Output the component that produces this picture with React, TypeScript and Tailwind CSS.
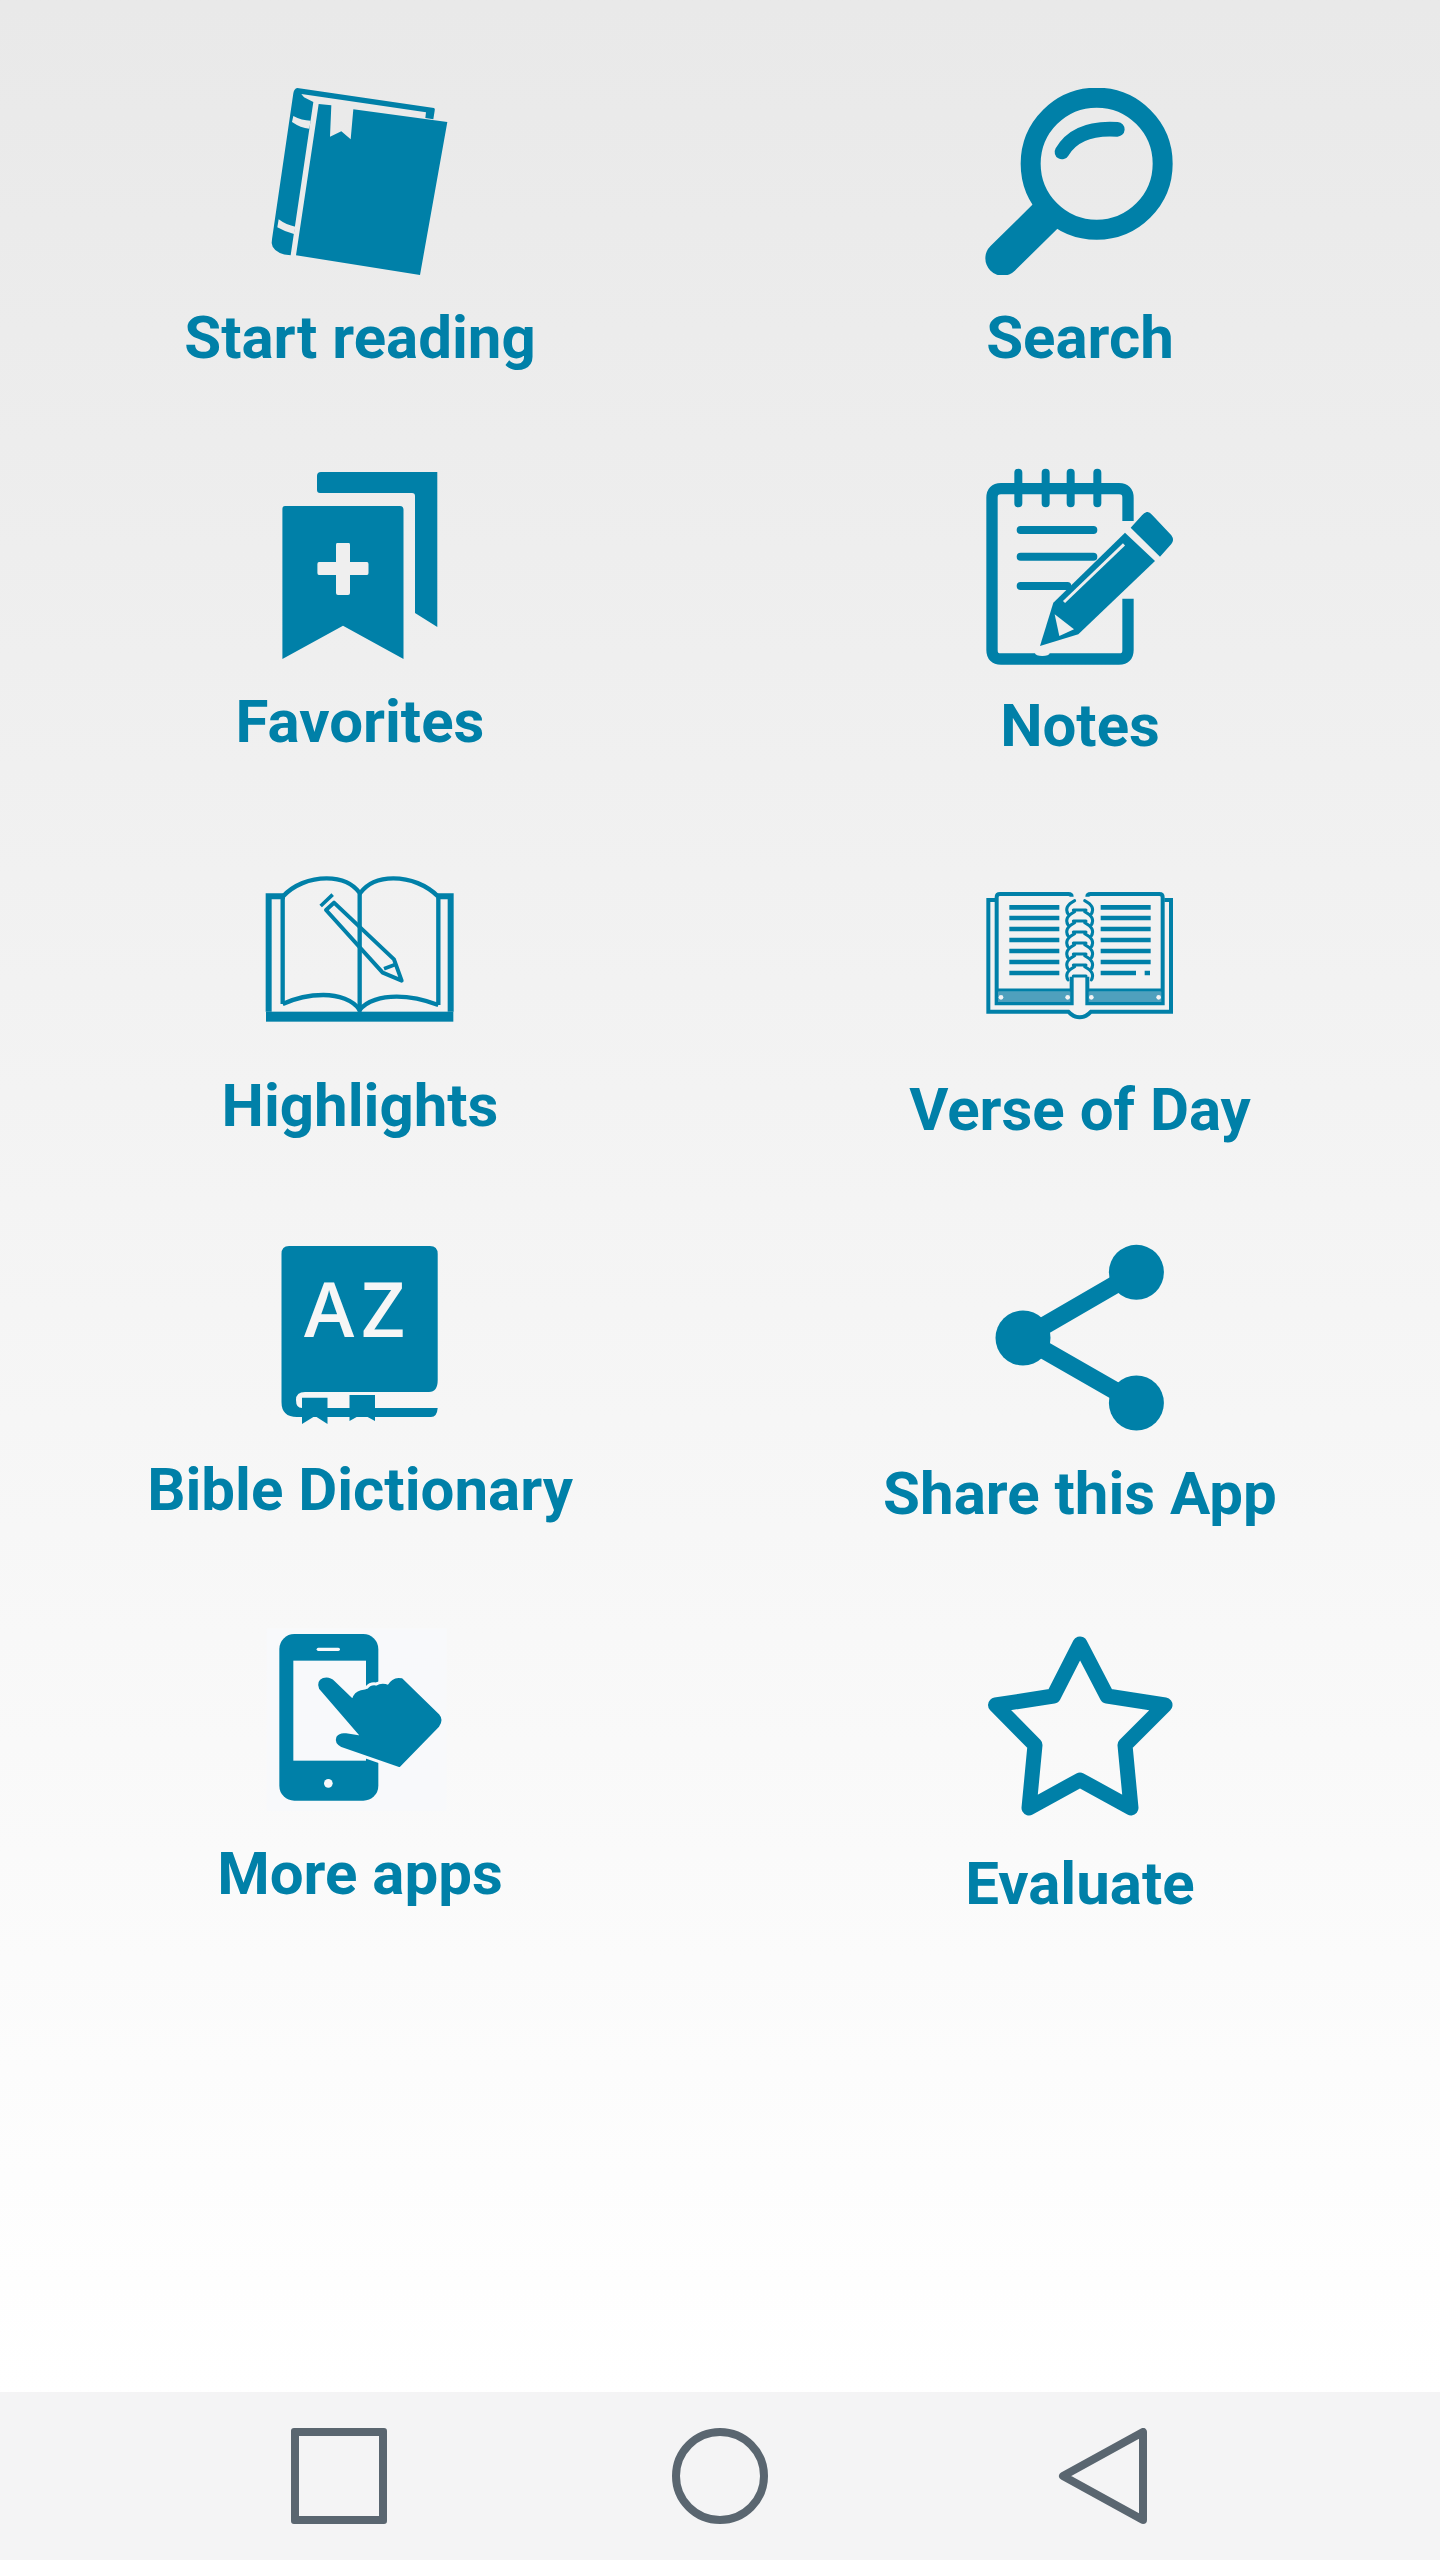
const BLUE = '#0080a8';

const BookIcon = () => (
  <svg width="200" height="187" viewBox="0 24 600 561" fill={BLUE}>
    <path d="M112 24 L522 84 Q526 86 524 92 L520 118 L496 114 L498 97 L124 42 L132 52 L160 66 L92 526 Q50 522 38 500 Q33 490 36 478 L100 40 Q102 26 112 24 Z" />
    <path d="M176 72 L214 76 L210 170 L244 154 L272 178 L280 88 L562 126 L480 585 L108 526 Z" />
    <path d="M100 108 Q125 122 152 122 L148 146 Q122 144 96 126 Z M56 418 Q80 436 106 440 L102 462 Q76 456 52 442 Z" fill="#ebebeb" />
  </svg>
);

const SearchIcon = () => (
  <svg width="200" height="187" viewBox="0 24 600 561" fill="none" stroke={BLUE}>
    <circle cx="350" cy="251" r="198" strokeWidth="60" />
    <path d="M246 216 Q290 140 412 148" strokeWidth="44" strokeLinecap="round" />
    <path d="M195 410 L68 535" strokeWidth="104" strokeLinecap="round" />
  </svg>
);

const FavoritesIcon = () => (
  <svg width="187" height="187" viewBox="0 0 187 187" fill={BLUE}>
    <path d="M54 0 H170.3 V155 L148 141 V24 Q148 21 145 21 H53 Q50 21 50 18 V4 Q50 0 54 0 Z" />
    <path d="M18 34 H133 Q136.5 34 136.5 38 V187 L76 153.7 L15.4 187 V37 Q15.4 34 18 34 Z" />
    <path d="M70 71 H82 Q83 71 83 73 V90 H100 Q101.5 90 101.5 92 V101 Q101.5 103 100 103 H83 V121 Q83 123 81 123 H71 Q69 123 69 121 V103 H52 Q50.4 103 50.4 101 V92 Q50.4 90 52 90 H69 V73 Q69 71 70 71 Z" fill="#efefef" />
  </svg>
);

const NotesIcon = () => (
  <svg width="200" height="191" viewBox="0 18 600 573" fill="none" stroke={BLUE} className="overflow-visible">
    <path d="M444 165 V95 Q444 68 417 68 H63 Q36 68 36 95 V552 Q36 579 63 579 H417 Q444 579 444 552 V398" strokeWidth="34" />
    <path d="M115 20 V112 M197 20 V112 M272 20 V112 M352 20 V112" strokeWidth="24" strokeLinecap="round" />
    <path d="M122 192 H340 M122 272 H340 M122 360 H262" strokeWidth="24" strokeLinecap="round" />
    <ellipse cx="187" cy="562" rx="22" ry="8" fill="#eeeeee" stroke="none" />
    <path d="M500 138 Q508 136 516 146 L574 208 Q584 222 574 234 L540 272 L452 185 L486 148 Q492 140 500 138 Z" fill={BLUE} stroke="none" />
    <path d="M435 200 L525 285 L295 505 L180 540 L220 410 Z" fill={BLUE} stroke="none" />
    <path d="M224 445 L282 490 L238 510 Z" fill="#eeeeee" stroke="none" />
    <path d="M252 408 L432 235" stroke="#eeeeee" strokeWidth="9" />
  </svg>
);

const HighlightsIcon = () => (
  <svg width="200" height="187" viewBox="0 -12 600 561" fill="none" stroke={BLUE} strokeWidth="13">
    <path d="M26 455 V109 H75 M572 455 V109 H530" strokeWidth="18" />
    <rect x="18" y="455" width="562" height="30" fill={BLUE} stroke="none" />
    <path d="M68 432 V110 C100 75 150 55 200 55 C245 55 280 72 300 100 C320 72 355 55 400 55 C450 55 500 75 535 110 V435" />
    <path d="M299 100 V455" />
    <path d="M68 432 C105 415 150 405 190 405 C235 405 280 420 299 450 C320 422 365 410 410 410 C450 410 495 420 535 435" />
    <path d="M198 150 L222 128 L402 298 L425 362 L368 338 Z" strokeWidth="12" strokeLinejoin="round" />
    <path d="M182 138 L218 104 M372 326 L410 312" strokeWidth="11" />
  </svg>
);

const spiralRows = [62, 95, 128, 161, 194, 227, 260];

const VerseIcon = () => (
  <svg width="200" height="191" viewBox="0 -72 600 573" fill="none" stroke={BLUE} strokeWidth="12" className="overflow-visible">
    <path d="M45 60 H25 V395 H265 Q280 412 299 412 Q318 412 333 395 H573 V60 H553" />
    <path d="M275 50 Q275 42 265 42 H60 Q50 42 50 52 V370 H275 V290 M322 50 Q322 42 332 42 H538 Q548 42 548 52 V370 H322 V290" />
    <path d="M88 82 H238 M88 114 H238 M88 147 H238 M88 180 H238 M88 213 H238 M88 246 H238 M88 279 H238 M362 82 H512 M362 114 H512 M362 147 H512 M362 180 H512 M362 213 H512 M362 246 H512 M362 279 H468 M494 279 H510" strokeWidth="14" />
    <path d="M54 334 H271 V366 H54 Z M326 334 H544 V366 H326 Z" fill="#4fa0bd" stroke="none" />
    <path d="M50 330 H275 M322 330 H548" strokeWidth="9" />
    <circle cx="63" cy="352" r="7" fill="#f3f3f4" stroke="none" />
    <circle cx="263" cy="352" r="7" fill="#f3f3f4" stroke="none" />
    <circle cx="334" cy="352" r="7" fill="#f3f3f4" stroke="none" />
    <circle cx="536" cy="352" r="7" fill="#f3f3f4" stroke="none" />
    {spiralRows.map((y) => (
      <path
        key={y}
        d={`M284 ${y} Q250 ${y + 18} 264 ${y + 40} M314 ${y} Q348 ${y + 18} 334 ${y + 40} M280 ${y + 28} H318`}
        strokeWidth="9"
        strokeLinecap="round"
      />
    ))}
  </svg>
);

const DictionaryIcon = () => (
  <svg width="187" height="187" viewBox="0 0 187 187" fill={BLUE}>
    <path d="M22 6 H163 Q170.7 6 170.7 14 V140 Q170.7 152 162 152 H38 Q29 152 29 160 Q29 168 35 168 H170.7 Q170 177 164 177 H30 Q14.5 177 14.5 162 V14 Q14.5 6 22 6 Z" />
    <path d="M35 157.7 H60.5 V184 L48 176 L35 184 Z M82.5 155 H108 V181 L95 174 L82.5 181 Z" />
    <text x="37" y="97" fontFamily="'Open Sans', sans-serif" fontSize="76" fontWeight="600" letterSpacing="7" fill="#f6f6f6">AZ</text>
  </svg>
);

const ShareIcon = () => (
  <svg width="187" height="191" viewBox="0 0 187 191" fill={BLUE} stroke={BLUE}>
    <path d="M149.4 32.3 L36 98 L149.4 163" fill="none" strokeWidth="18" />
    <circle cx="149.4" cy="32.3" r="27.5" stroke="none" />
    <circle cx="36" cy="98" r="27.5" stroke="none" />
    <circle cx="149.4" cy="163" r="27.5" stroke="none" />
  </svg>
);

const handPath =
  'M180 205 Q172 185 190 177 Q208 172 222 186 L278 240 Q285 218 303 214 Q318 212 325 208 Q335 196 350 200 Q365 190 385 198 Q400 172 425 178 L535 285 Q548 300 535 318 L418 438 L245 378 Q226 368 232 352 Q240 340 258 343 L305 350 Z';

const AppsIcon = () => (
  <svg width="200" height="187" viewBox="0 12 600 561" fill={BLUE}>
    <rect x="20" y="25" width="540" height="548" fill="#f8f9fb" />
    <rect x="58" y="42" width="297" height="500" rx="45" />
    <rect x="100" y="122" width="218" height="300" fill="#f8f9fb" />
    <rect x="170" y="83" width="70" height="10" rx="5" fill="#f8f9fb" />
    <circle cx="205" cy="490" r="13" fill="#f8f9fb" />
    <path d={handPath} stroke="#f8f9fb" strokeWidth="24" strokeLinejoin="round" />
    <path d={handPath} stroke={BLUE} strokeWidth="6" strokeLinejoin="round" />
  </svg>
);

const StarIcon = () => (
  <svg width="187" height="197" viewBox="0 0 187 197" fill="none" stroke={BLUE} strokeWidth="15" strokeLinejoin="round">
    <path d="M93 20 L120 72 L178 81 L138 121 L144 184 L93 156 L42 184 L48 121 L8.5 81 L66.5 72 Z" />
  </svg>
);

const items = [
  { label: 'Start reading', icon: <BookIcon /> },
  { label: 'Search', icon: <SearchIcon /> },
  { label: 'Favorites', icon: <FavoritesIcon /> },
  { label: 'Notes', icon: <NotesIcon /> },
  { label: 'Highlights', icon: <HighlightsIcon /> },
  { label: 'Verse of Day', icon: <VerseIcon /> },
  { label: 'Bible Dictionary', icon: <DictionaryIcon /> },
  { label: 'Share this App', icon: <ShareIcon /> },
  { label: 'More apps', icon: <AppsIcon /> },
  { label: 'Evaluate', icon: <StarIcon /> },
];

const App = () => {
  return (
    <div className="flex h-[2560px] flex-col [font-family:Roboto,sans-serif]">
      <main className="flex-1 bg-linear-to-b from-[#e9e9e9] to-white pt-[88px]">
        <div className="grid grid-cols-2 auto-rows-[384px]">
          {items.map((item) => (
            <div key={item.label} className="flex flex-col items-center">
              {item.icon}
              <span className="mt-[30px] text-[60px] leading-[66px] font-bold text-[#0080a8]">
                {item.label}
              </span>
            </div>
          ))}
        </div>
      </main>
      <nav className="flex h-[168px] items-center justify-center gap-[285px] bg-[#f4f4f5]">
        <div className="h-[96px] w-[96px] rounded-[3px] border-[8px] border-[#5a6670]" />
        <div className="h-[96px] w-[96px] rounded-full border-[8px] border-[#5a6670]" />
        <svg width="96" height="96" viewBox="0 0 96 96" fill="none" stroke="#5a6670" strokeWidth="8" strokeLinejoin="round">
          <path d="M90 4 V92 L10 48 Z" />
        </svg>
      </nav>
    </div>
  );
};

export default App;
